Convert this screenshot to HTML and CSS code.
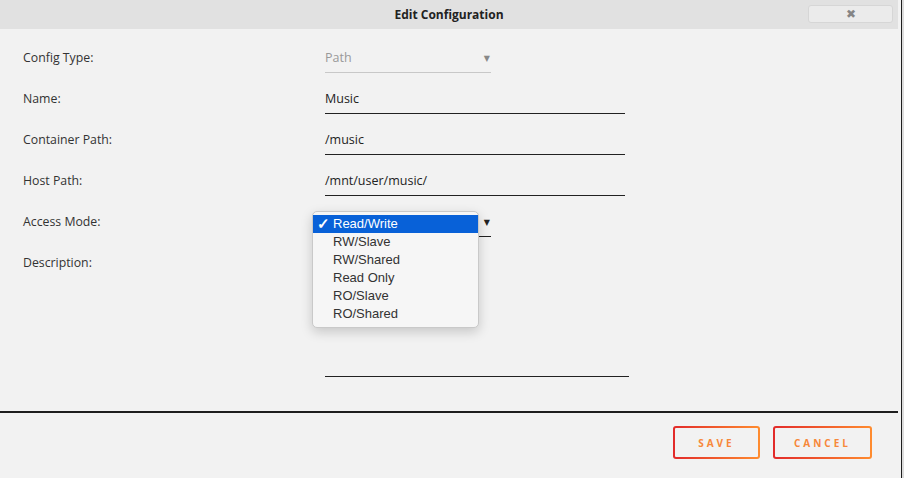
FILE: index.html
```html
<!DOCTYPE html>
<html lang="en">
<head>
  <meta charset="UTF-8" />
  <meta name="viewport" content="width=device-width, initial-scale=1" />
  <title>Edit Configuration</title>
  <link rel="stylesheet" href="styles.css">
</head>
<body>
  <div class="frame">
    <div class="dialog">
      <div class="dialog-header">
        <span class="dialog-title">Edit Configuration</span>
        <button class="close-btn" aria-label="Close">&#10006;</button>
      </div>

      <form class="config-form">
        <div class="form-row">
          <label class="form-label">Config Type:</label>
          <div class="field select-field muted">
            <span>Path</span>
            <span class="arrow">&#9660;</span>
          </div>
        </div>
        <div class="form-row">
          <label class="form-label">Name:</label>
          <div class="field text-field">Music</div>
        </div>
        <div class="form-row">
          <label class="form-label">Container Path:</label>
          <div class="field text-field">/music</div>
        </div>
        <div class="form-row">
          <label class="form-label">Host Path:</label>
          <div class="field text-field">/mnt/user/music/</div>
        </div>
        <div class="form-row">
          <label class="form-label">Access Mode:</label>
          <div class="field select-field">
            <span class="arrow">&#9660;</span>
            <ul class="select-menu" role="listbox">
              <li class="selected" role="option"><span class="check">&#10003;</span>Read/Write</li>
              <li role="option">RW/Slave</li>
              <li role="option">RW/Shared</li>
              <li role="option">Read Only</li>
              <li role="option">RO/Slave</li>
              <li role="option">RO/Shared</li>
            </ul>
          </div>
        </div>
        <div class="form-row">
          <label class="form-label">Description:</label>
          <div class="field textarea-field"></div>
        </div>
      </form>

      <div class="dialog-footer">
        <button class="btn-outline btn-save">SAVE</button>
        <button class="btn-outline">CANCEL</button>
      </div>
    </div>
  </div>
</body>
</html>
```

FILE: styles.css
```css
body {
  margin: 0;
  background: #dcdcdc;
  font-family: "Open Sans", "DejaVu Sans", sans-serif;
  color: #333;
}
.frame {
  width: 901px;
  height: 478px;
  background: #f2f2f2;
  border-right: 1px solid #1e1e1e;
}
.dialog {
  width: 898px;
  height: 478px;
  display: flex;
  flex-direction: column;
}

/* Header bar */
.dialog-header {
  height: 29px;
  flex-shrink: 0;
  background: #e1e1e1;
  display: flex;
  align-items: center;
  justify-content: center;
  position: relative;
}
.dialog-title {
  font-size: 12px;
  font-weight: 700;
  color: #222;
}
.close-btn {
  position: absolute;
  top: 5px;
  right: 5px;
  width: 85px;
  height: 18px;
  background: #ebebeb;
  border: 1px solid #d6d6d6;
  border-radius: 3px;
  color: #858585;
  font-size: 12px;
  line-height: 14px;
  padding: 0;
}

/* Form */
.config-form {
  padding: 14px 0 0 23px;
  display: flex;
  flex-direction: column;
  gap: 11px;
  height: 382px;
  flex-shrink: 0;
  box-sizing: border-box;
}
.form-row {
  display: grid;
  grid-template-columns: 302px 1fr;
  align-items: start;
}
.form-label {
  font-size: 12.3px;
  line-height: 30px;
  color: #333;
}
.field {
  height: 30px;
  box-sizing: border-box;
  border-bottom: 1px solid #222;
  font-size: 12.5px;
  line-height: 29px;
  color: #222;
}
.text-field {
  width: 300px;
}
.select-field {
  width: 166px;
  display: flex;
  position: relative;
}
.select-field .arrow {
  margin-left: auto;
}
.select-field.muted {
  color: #999;
  border-bottom-color: #c8c8c8;
}
.arrow {
  font-size: 8px;
  padding-right: 1px;
  color: #222;
}
.muted .arrow {
  color: #888;
}
.textarea-field {
  width: 304px;
  height: 129px;
}

/* Open dropdown */
.select-menu {
  position: absolute;
  left: -13px;
  top: 4px;
  width: 165px;
  margin: 0;
  padding: 3px 0 4px;
  list-style: none;
  background: #f6f6f6;
  border: 1px solid #c9c9c9;
  border-radius: 5px;
  box-shadow: 0 4px 12px rgba(0, 0, 0, 0.18);
  font-family: "Liberation Sans", Arial, sans-serif;
  font-size: 13px;
  line-height: 18px;
  color: #333;
  z-index: 2;
}
.select-menu li {
  padding-left: 20px;
  position: relative;
}
.select-menu li.selected {
  background: #0861d8;
  color: #fff;
}
.check {
  position: absolute;
  left: 4px;
  font-size: 15px;
  font-weight: 700;
}

/* Footer */
.dialog-footer {
  border-top: 2px solid #1e1e1e;
  display: flex;
  justify-content: flex-end;
  gap: 13px;
  padding: 13px 26px 0 0;
}
.btn-outline {
  height: 33px;
  padding: 0 19px;
  border: 2px solid transparent;
  border-radius: 3px;
  background: linear-gradient(#f2f2f2, #f2f2f2) padding-box,
              linear-gradient(90deg, #e22a2a, #ff8c2f) border-box;
  color: #f7883a;
  font-family: "Open Sans", sans-serif;
  font-size: 10px;
  font-weight: 700;
  letter-spacing: 3px;
}
.btn-save {
  width: 87px;
}
```
